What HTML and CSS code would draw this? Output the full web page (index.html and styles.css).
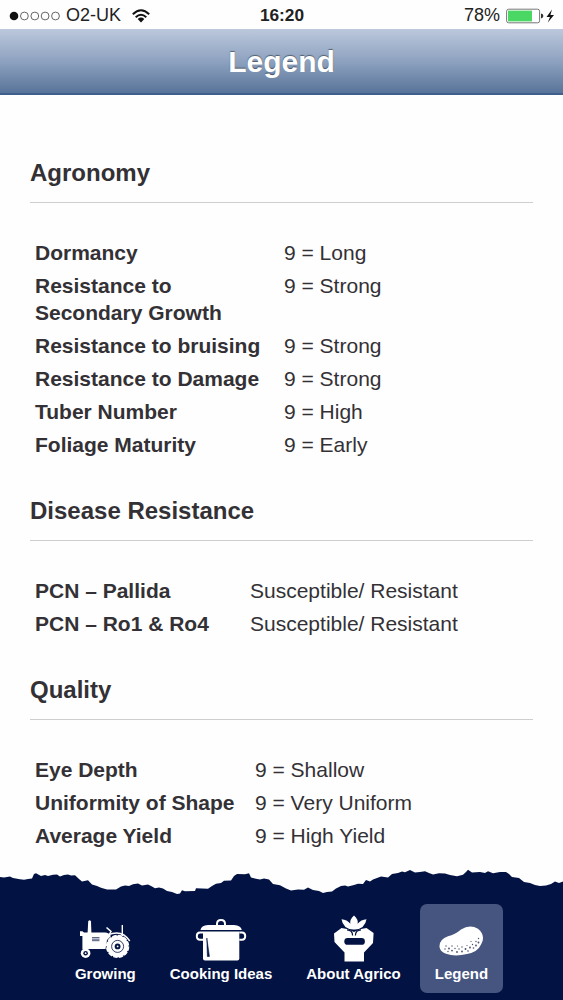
FILE: index.html
```
<!DOCTYPE html>
<html lang="en">
<head>
    <meta charset="UTF-8">
    <meta name="viewport" content="width=device-width, initial-scale=1.0">
    <title>Legend</title>
    <link rel="stylesheet" href="styles.css">
</head>
<body>
    <div class="status-bar">
        <div class="status-left">
            <svg class="signal" width="52" height="10" viewBox="0 0 52 10">
                <circle cx="5" cy="5" r="4.3" fill="#111"/>
                <g fill="none" stroke="#555" stroke-width="0.9">
                    <circle cx="15.4" cy="5" r="3.9"/>
                    <circle cx="25.8" cy="5" r="3.9"/>
                    <circle cx="36.1" cy="5" r="3.9"/>
                    <circle cx="46.5" cy="5" r="3.9"/>
                </g>
            </svg>
            <span class="carrier">O2-UK</span>
            <svg class="wifi" width="18" height="14" viewBox="0 0 18 14">
                <g fill="none" stroke="#111" stroke-width="2">
                    <path d="M0.8 5.2 Q9 -2.6 17.2 5.2"/>
                    <path d="M3.7 8.2 Q9 3.2 14.3 8.2"/>
                </g>
                <path d="M5.7 10 Q9 7.2 12.3 10 L9 13.4 Z" fill="#111"/>
            </svg>
        </div>
        <div class="clock">16:20</div>
        <div class="status-right">
            <span class="percent">78%</span>
            <svg width="49" height="16" viewBox="0 0 49 16">
                <rect x="0.6" y="1.2" width="33" height="13.6" rx="2" fill="#fff" stroke="#777" stroke-width="1"/>
                <rect x="2" y="2.6" width="24" height="10.8" fill="#4bd763"/>
                <path d="M35 5.6 Q37.4 6 37.4 8 Q37.4 10 35 10.4 Z" fill="#333"/>
                <path d="M46 1.5 L40.5 9 H44 L41.8 14.5 L48 7 H44.4 Z" fill="#111"/>
            </svg>
        </div>
    </div>

    <header>
        <h1>Legend</h1>
    </header>

    <main>
        <section>
            <h2>Agronomy</h2>
            <table class="agronomy">
                <tr><th>Dormancy</th><td>9 = Long</td></tr>
                <tr><th>Resistance to<br>Secondary Growth</th><td>9 = Strong</td></tr>
                <tr><th>Resistance to bruising</th><td>9 = Strong</td></tr>
                <tr><th>Resistance to Damage</th><td>9 = Strong</td></tr>
                <tr><th>Tuber Number</th><td>9 = High</td></tr>
                <tr><th>Foliage Maturity</th><td>9 = Early</td></tr>
            </table>
        </section>

        <section>
            <h2>Disease Resistance</h2>
            <table class="disease">
                <tr><th>PCN – Pallida</th><td>Susceptible/ Resistant</td></tr>
                <tr><th>PCN – Ro1 &amp; Ro4</th><td>Susceptible/ Resistant</td></tr>
            </table>
        </section>

        <section>
            <h2>Quality</h2>
            <table class="quality">
                <tr><th>Eye Depth</th><td>9 = Shallow</td></tr>
                <tr><th>Uniformity of Shape</th><td>9 = Very Uniform</td></tr>
                <tr><th>Average Yield</th><td>9 = High Yield</td></tr>
            </table>
        </section>
    </main>

    <footer>
        <!-- Torn soil edge -->
        <svg class="soil" width="563" height="34" viewBox="0 0 563 34">
            <path fill="#021243" d="M0 17 L4 17.5 L10 16.5 L13 18 L20 19.3 L24 19.8 L28 19 L32 18.5 L34 14 L36 13.2 L41 16 L45 15 L48 16 L53 14.8 L57 14.6 L60 16.5 L64 15 L68 14.6 L71 15.5 L75 15.2 L79 19 L82 21.5 L88 20.2 L92 24.5 L97 26 L101 27.8 L107 29.6 L116 29.4 L121 26.5 L125 25.5 L129 26 L133 24.2 L138 23.6 L142 25.5 L148 24.5 L152 26.5 L155 28.3 L159 27.6 L163 28.6 L167 31 L172 32 L177 34 L180 33.4 L182 30.2 L185 31.3 L195 31 L196 28.3 L208 28.7 L212 26 L216 23.8 L221 23 L224 20.8 L231 20.5 L234 16 L237 14 L245 14.3 L249 13.3 L251 17.5 L256 18.7 L260 19.6 L264 18.5 L269 19.6 L273 24 L280 25.3 L286 28.4 L291 30.5 L298 29.5 L304 29.7 L308 27.5 L313 30 L319 31 L323 33 L327 32 L332 31.6 L336 28.4 L341 26 L345 25.4 L348 26.5 L354 25 L358 23.8 L363 24 L366 20 L370 21.5 L373 19.5 L377 18 L381 16.6 L388 17.6 L392 14 L398 13 L402 11.4 L405 12.2 L410 10 L415 12.5 L420 12 L425 11.3 L429 13 L433 14.5 L439 13.2 L445 13.6 L450 15 L457 16.3 L463 14.8 L466 12 L468 9.8 L472 12.5 L480 12 L485 13 L488 11.3 L493 13.3 L500 12 L506 12 L509 14 L512 17 L519 18 L524 22 L530 23 L535 25 L540 26 L546 25.5 L551 24 L555 21.5 L559 23 L563 21.5 V34 H0 Z"/>
        </svg>
        <nav>
            <a href="#" class="tab">
                <svg width="52" height="44" viewBox="0 0 52 44">
                    <g fill="#fff">
                        <path d="M8.6 15 L9.2 3.6 Q10.6 0.8 12 3.6 L12.4 15 Z"/>
                        <path d="M1 13.2 H3.4 L5 14.4 H26 Q30 14.8 32 18 L28 22 L26.5 31 H3.4 V18 H1 Z"/>
                        <circle cx="6.6" cy="35.2" r="4.8"/>
                        <path d="M42.6 7 H44 V18 H42.6 Z"/>
                        <circle cx="38.6" cy="28.4" r="10.8"/>
                    </g>
                    <path d="M27.5 9.5 L32 13.5 L30 17" fill="none" stroke="#fff" stroke-width="1.5"/>
                    <circle cx="38.6" cy="28.4" r="10.9" fill="none" stroke="#fff" stroke-width="1.6" stroke-dasharray="4.4 1.3"/>
                    <path d="M29 16.8 Q43 11 50.8 23" fill="none" stroke="#fff" stroke-width="1.4"/>
                    <circle cx="38.6" cy="28.4" r="6" fill="none" stroke="#021243" stroke-width="0.8"/>
                    <circle cx="38.6" cy="28.4" r="2.9" fill="#021243"/>
                    <circle cx="38.6" cy="28.4" r="0.9" fill="#fff"/>
                    <circle cx="6.6" cy="35.2" r="2.3" fill="#021243"/>
                    <circle cx="6.6" cy="35.2" r="0.9" fill="#fff"/>
                    <path d="M13 19.6 H20.5 M13 21.2 H20.5 M13 22.7 H20.5" stroke="#4d577b" stroke-width="1"/>
                </svg>
                <span>Growing</span>
            </a>
            <a href="#" class="tab">
                <svg width="52" height="44" viewBox="0 0 52 44">
                    <path d="M22 7.8 V6 Q22 2 26 2 Q30 2 30 6 V7.8" fill="none" stroke="#fff" stroke-width="2"/>
                    <path d="M5.5 12 Q6 7.6 13 7 H39 Q46 7.6 46.8 12 Z" fill="#fff"/>
                    <path d="M8 13.5 H44.3 V40.5 Q44.3 42.5 42.3 42.5 H10 Q8 42.5 8 40.5 Z" fill="#fff"/>
                    <path d="M8 14.5 H5 Q1.8 14.5 1.8 18 Q1.8 21.8 5 21.8 H8 M44.3 14.5 H47 Q50.2 14.5 50.2 18 Q50.2 21.8 47 21.8 H44.3" fill="none" stroke="#fff" stroke-width="2"/>
                    <path d="M11.8 20 L14.4 38.5 H12.4 Z" fill="#021243" stroke="#021243" stroke-width="0.6"/>
                </svg>
                <span>Cooking Ideas</span>
            </a>
            <a href="#" class="tab">
                <svg width="52" height="47" viewBox="1 0 52 47">
                    <g fill="#fff">
                        <path d="M14.5 13 L20 14 L27 17 L34 14 L39.5 13 L46.6 18 L46 28 L37 37.5 V46.5 H17.5 V37.5 L7.5 27 L7 18.5 Z"/>
                        <path d="M27 0.5 Q31.5 4.4 30.6 8.8 Q34 4.6 39.5 4.2 Q38 13.6 28 14.6 H26 Q16 13.6 14.5 4.2 Q20 4.6 23.4 8.8 Q22.5 4.4 27 0.5 Z"/>
                    </g>
                    <path d="M20 14.8 Q25.5 15 25.6 20.5 M34 14.8 Q28.5 15 28.4 20.5" fill="none" stroke="#021243" stroke-width="1.2"/>
                    <rect x="17.3" y="23" width="20.6" height="6.8" rx="3.4" fill="#021243"/>
                </svg>
                <span>About Agrico</span>
            </a>
            <a href="#" class="tab active">
                <svg width="48" height="40" viewBox="0 0 48 40">
                    <path d="M2.5 25 Q2 17.5 11 14.3 Q18 12.6 24 7.4 Q33 2 41 6.8 Q49 13.5 44.3 22 Q41 30 30 32 Q18 35 9 31.8 Q3 29.5 2.5 25 Z" fill="#fff"/>
                    <g fill="#464f6c">
                        <circle cx="9" cy="24" r=".7"/>
                        <circle cx="8" cy="27" r=".7"/>
                        <circle cx="12" cy="26.5" r=".9"/>
                        <circle cx="11" cy="29.5" r=".7"/>
                        <circle cx="15" cy="24" r=".7"/>
                        <circle cx="15" cy="28.6" r=".9"/>
                        <circle cx="18" cy="26.5" r=".7"/>
                        <circle cx="20" cy="30" r=".9"/>
                        <circle cx="22" cy="27" r=".7"/>
                        <circle cx="20.5" cy="24" r=".6"/>
                        <circle cx="25" cy="25" r=".7"/>
                        <circle cx="25" cy="29.5" r=".9"/>
                        <circle cx="28.5" cy="27" r=".9"/>
                        <circle cx="30" cy="23.5" r=".6"/>
                        <circle cx="31" cy="29" r=".8"/>
                        <circle cx="33" cy="25.5" r=".9"/>
                        <circle cx="35.5" cy="22.5" r=".7"/>
                        <circle cx="34" cy="19.5" r=".6"/>
                        <circle cx="36.5" cy="26" r=".8"/>
                        <circle cx="39" cy="23.5" r=".9"/>
                        <circle cx="39" cy="19.5" r=".7"/>
                        <circle cx="41.5" cy="20.5" r=".9"/>
                        <circle cx="41.5" cy="16.5" r=".7"/>
                    </g>
                </svg>
                <span>Legend</span>
            </a>
        </nav>
    </footer>
</body>
</html>
```
FILE: styles.css
```
/* Global Styles */
* {
    box-sizing: border-box;
}

body {
    margin: 0;
    height: 1000px;
    display: flex;
    flex-direction: column;
    overflow: hidden;
    font-family: "Liberation Sans", Arial, sans-serif;
    background-color: #fefefe;
    color: #333135;
}

/* Status Bar */
.status-bar {
    display: grid;
    grid-template-columns: 1fr auto 1fr;
    align-items: center;
    flex: none;
    height: 29px;
    padding: 2px 8px 0 9px;
    font-size: 18px;
    color: #222;
}

.status-left, .status-right {
    display: flex;
    align-items: center;
}

.status-right {
    justify-content: flex-end;
    gap: 6px;
}

.carrier {
    margin: 0 11px 0 5px;
}

.clock {
    font-weight: bold;
    font-size: 17.3px;
}

/* Header Styles */
header {
    flex: none;
    height: 66px;
    background: linear-gradient(#bcc8dc, #8ea2c0 50%, #587499);
    border-bottom: 2px solid #3e5f8c;
    text-align: center;
}

h1 {
    margin: 0;
    font-size: 30px;
    line-height: 66px;
    color: #fff;
    text-shadow: 0 -1px 1px rgba(0, 0, 0, 0.45);
}

/* Legend Tables */
main {
    flex: 1;
    min-height: 0;
    padding: 63px 30px 0;
}

h2 {
    margin: 0 0 33px;
    padding-bottom: 14px;
    border-bottom: 1.5px solid #cfcdcf;
    font-size: 24px;
    line-height: 30px;
}

section {
    margin-bottom: 35px;
}

table {
    margin-left: 5px;
    border-collapse: collapse;
    font-size: 21px;
    line-height: 27px;
}

th, td {
    padding: 3px 0;
    text-align: left;
    vertical-align: top;
    white-space: nowrap;
}

.agronomy th {
    width: 249px;
}

.disease th {
    width: 215px;
}

.quality th {
    width: 220px;
}

/* Bottom Navigation */
footer {
    flex: none;
    height: 140px;
    z-index: 1;
}

.soil {
    display: block;
}

nav {
    display: flex;
    justify-content: center;
    gap: 4px;
    height: 106px;
    padding-top: 10px;
    background-color: #021243;
}

.tab {
    display: flex;
    flex-direction: column;
    align-items: center;
    justify-content: flex-end;
    height: 89px;
    padding: 0 15px 10px;
    border-radius: 7px;
    color: #fff;
    font-size: 15px;
    font-weight: bold;
    line-height: 18px;
    text-decoration: none;
}

.tab svg {
    margin-bottom: 3px;
}

.tab.active {
    background-color: #46557f;
}
```
